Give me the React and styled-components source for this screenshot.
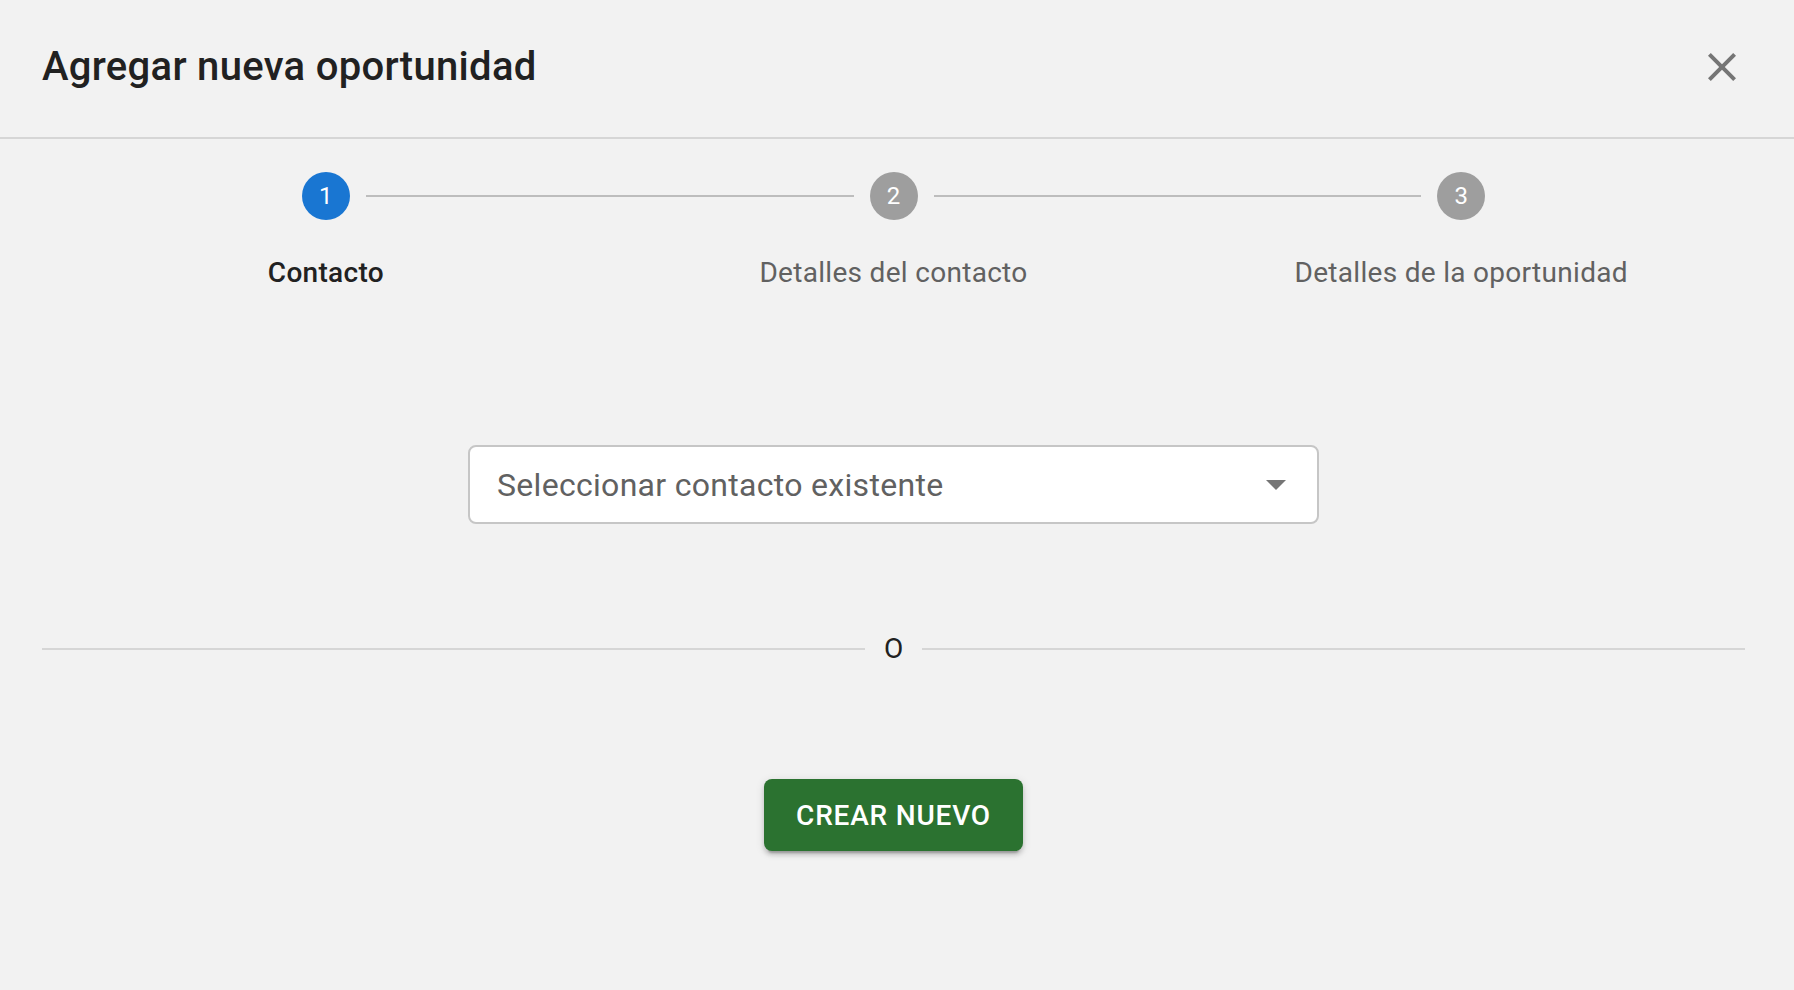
import React, { useState } from "react";
import styled, { createGlobalStyle } from "styled-components";

const GlobalStyle = createGlobalStyle`
  html, body {
    margin: 0;
    padding: 0;
    background: #f2f2f2;
  }
  body {
    font-family: Roboto, "Liberation Sans", Arial, sans-serif;
    -webkit-font-smoothing: antialiased;
  }
`;

const steps = ["Contacto", "Detalles del contacto", "Detalles de la oportunidad"];

const App = () => {
  const [active] = useState(0);

  return (
    <Dialog>
      <GlobalStyle />
      <Header>
        <Title>Agregar nueva oportunidad</Title>
        <CloseButton aria-label="cerrar">
          <svg width="48" height="48" viewBox="0 0 24 24" fill="currentColor">
            <path d="M19 6.41 17.59 5 12 10.59 6.41 5 5 6.41 10.59 12 5 17.59 6.41 19 12 13.41 17.59 19 19 17.59 13.41 12z" />
          </svg>
        </CloseButton>
      </Header>

      <Body>
        <Stepper>
          {steps.map((label, i) => (
            <Step key={label}>
              {i > 0 && <Connector />}
              <StepCircle $active={i === active}>{i + 1}</StepCircle>
              <StepLabel $active={i === active}>{label}</StepLabel>
            </Step>
          ))}
        </Stepper>

        <SelectBox>
          <SelectText>Seleccionar contacto existente</SelectText>
          <svg width="20" height="10" viewBox="7 10 10 5" fill="#757575">
            <path d="M7 10l5 5 5-5z" />
          </svg>
        </SelectBox>

        <OrDivider>
          <span>O</span>
        </OrDivider>

        <CreateButton>Crear nuevo</CreateButton>
      </Body>
    </Dialog>
  );
};

const Dialog = styled.div`
  width: 100vw;
  min-height: 100vh;
  background: #f2f2f2;
  color: #212121;
`;

const Header = styled.header`
  height: 139px;
  box-sizing: border-box;
  padding: 0 48px 4px 42px;
  display: flex;
  align-items: center;
  justify-content: space-between;
  border-bottom: 2px solid #d6d6d6;
`;

const Title = styled.h2`
  margin: 0;
  font-size: 40px;
  font-weight: 500;
  line-height: 1.6;
  letter-spacing: 0.3px;
  color: #212121;
`;

const CloseButton = styled.button`
  border: 0;
  padding: 0;
  background: transparent;
  color: #757575;
  display: flex;
  cursor: pointer;
`;

const Body = styled.main`
  padding: 33px 49px 0 42px;
  display: flex;
  flex-direction: column;
  align-items: center;
`;

const Stepper = styled.div`
  display: flex;
  width: 100%;
`;

const Step = styled.div`
  flex: 1;
  position: relative;
  display: flex;
  flex-direction: column;
  align-items: center;
`;

// line between circles, sits behind the step header
const Connector = styled.span`
  position: absolute;
  top: 23px;
  left: calc(-50% + 40px);
  right: calc(50% + 40px);
  border-top: 2px solid #bdbdbd;
`;

const StepCircle = styled.div`
  width: 48px;
  height: 48px;
  border-radius: 50%;
  background: ${(p) => (p.$active ? "#1976d2" : "#9e9e9e")};
  color: #fff;
  font-size: 24px;
  display: flex;
  align-items: center;
  justify-content: center;
`;

const StepLabel = styled.div`
  margin-top: 33px;
  font-size: 28px;
  line-height: 40px;
  letter-spacing: 0.3px;
  font-weight: ${(p) => (p.$active ? 500 : 400)};
  color: ${(p) => (p.$active ? "#212121" : "#616161")};
`;

const SelectBox = styled.div`
  margin-top: 152px;
  width: 851px;
  height: 79px;
  box-sizing: border-box;
  border: 2px solid #c6c6c6;
  border-radius: 8px;
  background: #fff;
  padding: 0 31px 0 27px;
  display: flex;
  align-items: center;
  justify-content: space-between;
`;

const SelectText = styled.span`
  font-size: 32px;
  letter-spacing: 0.3px;
  color: #616161;
`;

const OrDivider = styled.div`
  margin-top: 105px;
  width: 100%;
  display: flex;
  align-items: center;
  font-size: 28px;
  line-height: 40px;
  color: #212121;

  &::before,
  &::after {
    content: "";
    flex: 1;
    border-top: 2px solid #d6d6d6;
  }

  span {
    padding: 0 19px;
  }
`;

const CreateButton = styled.button`
  margin-top: 110px;
  height: 72px;
  padding: 0 32px;
  border: 0;
  border-radius: 8px;
  background: #2b7230;
  color: #fff;
  font-family: inherit;
  font-size: 28px;
  font-weight: 500;
  letter-spacing: 0.8px;
  text-transform: uppercase;
  box-shadow: 0 6px 2px -4px rgba(0, 0, 0, 0.2), 0 4px 4px 0 rgba(0, 0, 0, 0.14),
    0 2px 10px 0 rgba(0, 0, 0, 0.12);
  cursor: pointer;
`;

export default App;
